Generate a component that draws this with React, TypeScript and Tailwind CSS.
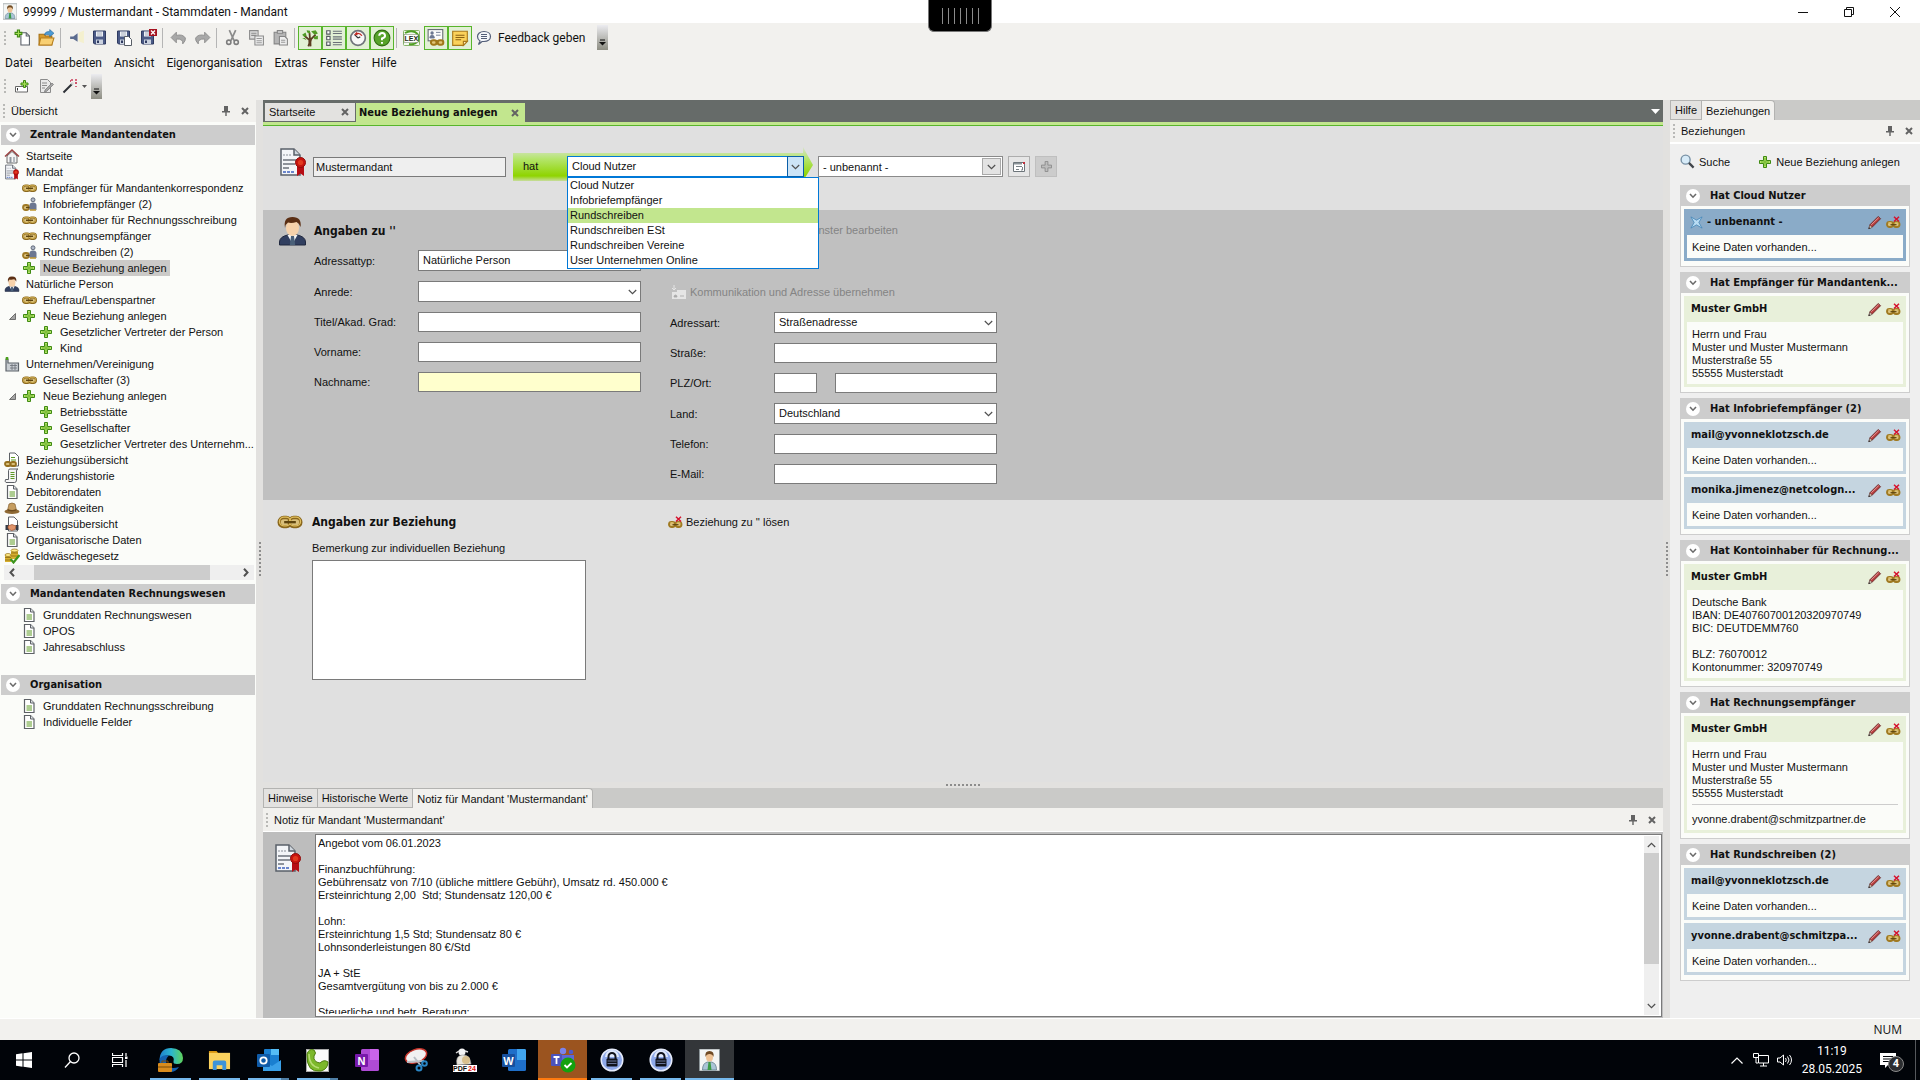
import type { ReactNode } from "react";
import clsx from "clsx";

interface IconProps {
	className?: string;
}

const Svg = ({
	children,
	className = "size-4",
	box = "0 0 16 16",
}: {
	children: ReactNode;
	className?: string;
	box?: string;
}) => (
	<svg
		viewBox={box}
		className={clsx("shrink-0", className)}
		fill="none"
		aria-hidden="true">
		{children}
	</svg>
);

/* ---------- icons ---------- */

const PlusIcon = ({ className = "size-3" }: IconProps) => (
	<Svg className={className} box="0 0 12 12">
		<path
			d="M4.5 .5h3v4h4v3h-4v4h-3v-4h-4v-3h4z"
			fill="#b5e26b"
			stroke="#3f8a12"
		/>
		<path d="M6 2v8M2 6h8" stroke="#6cb52a" />
	</Svg>
);

const ChainIcon = ({ className = "w-[15px] h-[9px]" }: IconProps) => (
	<Svg className={className} box="0 0 15 9">
		<rect x="1" y="1.5" width="7" height="5.5" rx="2.7" fill="#d9bf7a" stroke="#8a671c" strokeWidth="2" />
		<rect x="7" y="1.5" width="7" height="5.5" rx="2.7" fill="#d9bf7a" stroke="#8a671c" strokeWidth="2" />
		<rect x="1.2" y="1.3" width="6.6" height="5.2" rx="2.6" stroke="#e0bf60" strokeWidth=".8" />
		<rect x="7.2" y="1.3" width="6.6" height="5.2" rx="2.6" stroke="#e0bf60" strokeWidth=".8" />
		<path d="M4 4.3h7" stroke="#5e450f" strokeWidth="1.4" />
	</Svg>
);

const ChainPersonIcon = () => (
	<Svg className="w-[15px] h-[15px]" box="0 0 15 15">
		<rect x="1" y="8" width="6" height="5" rx="2.5" fill="#d9bf7a" stroke="#a07a26" strokeWidth="1.8" />
		<path d="M4 10.5h5" stroke="#5e450f" strokeWidth="1.4" />
		<circle cx="11" cy="2.8" r="2" fill="#aeb7c6" stroke="#4a5263" strokeWidth=".8" />
		<path d="M7.5 13V8.5q0-3 3.5-3t3.5 3V13z" fill="#6c7791" />
		<path d="M8 13h6" stroke="#c29b3a" strokeWidth="1.6" />
	</Svg>
);

const UnlinkIcon = () => (
	<Svg className="w-[15px] h-[13px]" box="0 0 15 13">
		<rect x="1" y="6" width="6" height="5" rx="2.5" fill="#dcc27c" stroke="#a07a22" strokeWidth="1.9" />
		<rect x="7.5" y="6" width="6" height="5" rx="2.5" fill="#dcc27c" stroke="#a07a22" strokeWidth="1.9" />
		<path d="M2 7.2q2-1.5 4 0M8.500 7.200q2-1.500 4 0" stroke="#efd580" strokeWidth=".8" />
		<path d="M4.500 8.700h6" stroke="#5e450f" strokeWidth="1.2" />
		<path d="M8 .8l5 4.700M13 .8l-5 4.700" stroke="#d6112c" strokeWidth="1.500" />
	</Svg>
);

const PencilIcon = () => (
	<Svg className="size-[15px]">
		<path d="M2 14.500l1-4L12 1.500l2.500 2.500-9 9z" fill="#b33b3b" stroke="#5f2222" strokeWidth=".8" />
		<path d="M4.500 10.500L12.500 2.800" stroke="#eba0a0" />
		<path d="M2 14.500l1-3.500 2.500 2.300z" fill="#f1dfc6" stroke="#555" strokeWidth=".6" />
		<path d="M1.500 15l.8-2 1.200 1.200z" fill="#222" />
	</Svg>
);

const DocIcon = ({ className = "size-4" }: IconProps) => (
	<Svg className={className}>
		<path d="M3.500 1.500h6l3.500 3.500v9.500H3.500z" fill="#fff" stroke="#5d6166" strokeWidth="1.200" />
		<path d="M9.500 1.500V5H13" stroke="#5d6166" fill="#dfe3e6" />
		<path d="M5.500 8h5.500M5.500 10h5.500M5.500 12h5.500" stroke="#5d9a24" />
	</Svg>
);

const CertIcon = ({ className = "size-4" }: IconProps) => (
	<Svg className={className} box="0 0 28 30">
		<path d="M2 2h13l6 6v20H2z" fill="#f3f5f8" stroke="#5a6069" strokeWidth="1.500" />
		<path d="M15 2v6h6" fill="#cfd6dd" stroke="#5a6069" strokeWidth="1.500" />
		<path d="M4 8h8" stroke="#8a9099" strokeDasharray="2 1" />
		<path d="M4 13h13M4 17h12M4 21h6" stroke="#6c727b" strokeWidth="1.300" />
		<path d="M4 25h12" stroke="#3f62bd" strokeWidth="1.500" strokeDasharray="3 1" />
		<path d="M18 18v11l3.500-2.500L25 29V18z" fill="#b70d14" />
		<circle cx="21.500" cy="15.500" r="5" fill="#c8140f" stroke="#8f0c0c" />
		<circle cx="21.500" cy="15.500" r="2.600" fill="#e23a20" />
	</Svg>
);

const PersonIcon = ({ className = "size-4" }: IconProps) => (
	<Svg className={className} box="0 0 28 30">
		<path d="M1 29v-3q0-5 8-7h10q8 2 8 7v3z" fill="#313f60" stroke="#20283f" />
		<path d="M9 19l5 9 5-9z" fill="#f5f5f5" />
		<path d="M12.500 20h3l1.200 9h-5.400z" fill="#4a6079" />
		<ellipse cx="14" cy="12" rx="6.500" ry="8" fill="#f7d2ab" />
		<path d="M6.500 12Q4.500 1 14 1t8 10q-1.500-4-4-5-5 1.500-8.500.500-2.500 1.500-3 5.500z" fill="#5b2f14" />
	</Svg>
);

const HouseIcon = () => (
	<Svg>
		<path d="M3 8v7h10V8L8 3.500z" fill="#f4f4f4" stroke="#6d6d6d" />
		<path d="M1 8.500L8 2l7 6.500" stroke="#9b4141" strokeWidth="1.400" />
		<rect x="5.500" y="9" width="2" height="6" fill="#8f969d" />
		<rect x="9" y="9" width="2" height="6" fill="#b5babf" />
	</Svg>
);

const FactoryIcon = () => (
	<Svg>
		<path d="M2 15V3h2v4h10.500v8z" fill="#c9ced3" stroke="#5d636a" strokeWidth="1.200" />
		<path d="M3 1v3" stroke="#4aa01c" strokeWidth="2.500" />
		<path d="M6 9.500h7M6 12h7M8 8v6M11 8v6" stroke="#6a7077" strokeWidth=".8" />
	</Svg>
);

const DocChainIcon = () => (
	<Svg>
		<path d="M5.500 1h5.500l3.500 3.500V14h-9z" fill="#fff" stroke="#5d6166" />
		<path d="M7 5.500h4M7 8h5" stroke="#5d9a24" />
		<rect x="1" y="10" width="5.500" height="4" rx="2" fill="#d9bf7a" stroke="#96701e" strokeWidth="1.800" />
		<rect x="6.500" y="10" width="5.500" height="4" rx="2" fill="#d9bf7a" stroke="#96701e" strokeWidth="1.800" />
	</Svg>
);

const ScrollIcon = () => (
	<Svg>
		<path d="M4.500 2.500q0-1.500 1.500-1.500h8q-1.500 0-1.500 2v9q0 2.500-2 2.500H2q-1.500-1-.5-3h3z" fill="#f5f5f5" stroke="#5d6166" />
		<path d="M6.500 4.500h4M6.500 6.500h4M6.500 8.500h4M6.500 10.500h4" stroke="#5d9a24" />
	</Svg>
);

const HatIcon = () => (
	<Svg>
		<ellipse cx="8" cy="11.500" rx="7.500" ry="2.500" fill="#8f6a34" />
		<path d="M3.500 10.500L5 4q3-2 6 0l1.500 6.500q-4.500 2-9 0z" fill="#c59d5f" stroke="#856230" strokeWidth=".7" />
		<path d="M3.800 9q4.200 2 8.500 0v1.500q-4.300 2-8.800 0z" fill="#6b4a1d" />
	</Svg>
);

const HandshakeIcon = () => (
	<Svg>
		<path d="M4.500 1h5.500l3.500 3.500V15h-9z" fill="#fff" stroke="#5d6166" />
		<path d="M1.500 9h3v5h-3zM11.500 9h3v5h-3z" fill="#343b47" />
		<path d="M4 10l4-1.500 4 1.500-1 3.500-3.500 1L4 12.500z" fill="#e0946a" stroke="#9c532d" strokeWidth=".7" />
	</Svg>
);

const CoinsIcon = () => (
	<Svg>
		<path d="M1 7h6v7H1zM7 2h7v9H7z" fill="#d8b02f" />
		<path d="M1 9.500h6M1 12h6M7 5h7M7 8h7" stroke="#8d6b10" strokeWidth=".8" />
		<ellipse cx="4" cy="7" rx="3" ry="1.500" fill="#ffe984" stroke="#93701a" strokeWidth=".7" />
		<ellipse cx="10.500" cy="2.500" rx="3.500" ry="1.500" fill="#ffe984" stroke="#93701a" strokeWidth=".7" />
		<path d="M6.500 11l3 3.500L15.500 7" stroke="#3d941c" strokeWidth="2.200" />
	</Svg>
);

const PinIcon = () => (
	<Svg className="w-2 h-[10px]" box="0 0 8 10">
		<path d="M2 0h4v5h2v1.500H4.700V10H3.300V6.500H0V5h2z" fill="#636363" />
	</Svg>
);

const CrossIcon = () => (
	<Svg className="size-2" box="0 0 8 8">
		<path d="M1 1l6 6M7 1L1 7" stroke="#636363" strokeWidth="2" />
	</Svg>
);

const Chevron = ({ className = "w-[9px] h-[6px]" }: IconProps) => (
	<Svg className={className} box="0 0 9 6">
		<path d="M.8 1l3.700 3.700L8.200 1" stroke="#505050" strokeWidth="1.200" />
	</Svg>
);

const BadgeChevron = () => (
	<span className="flex size-[14px] shrink-0 items-center justify-center rounded-full bg-white">
		<Svg className="w-2 h-[6px]" box="0 0 8 6">
			<path d="M1 1l3 3.200L7 1" stroke="#6b6b6b" strokeWidth="1.600" />
		</Svg>
	</span>
);

const ClientIcon = ({ className = "size-4" }: IconProps) => (
	<Svg className={className} box="0 0 20 22">
		<rect width="20" height="22" fill="#f3f5f4" stroke="#8d9699" />
		<path d="M3 21q0-7 5-8h4q5 1 5 8z" fill="#a9c4d6" stroke="#55707f" strokeWidth=".7" />
		<path d="M9 13h2l1 8H8z" fill="#3a9b46" />
		<ellipse cx="10" cy="8" rx="3.500" ry="4.500" fill="#eec294" />
		<path d="M6 8Q5 2 10 2t4 6q-1-3-4-3T6 8z" fill="#6f4a23" />
	</Svg>
);

const FloppyIcon = ({ children }: { children?: ReactNode }) => (
	<Svg className="size-[17px]" box="0 0 17 17">
		<path d="M1.500 2h12v13h-11l-1-1z" fill="#4b5a86" stroke="#2f3b61" />
		<path d="M4 2.500h7v5H4z" fill="#eef1f6" />
		<path d="M5 4h5M5 6h5" stroke="#8d96ab" strokeWidth=".7" />
		<path d="M4 10.500h7V15H4z" fill="#cbd2df" />
		<path d="M5 11.500h2V14H5z" fill="#2f3b61" />
		{children}
	</Svg>
);

/* ---------- toolbar ---------- */

const NewIcon = () => (
	<Svg className="size-[17px]">
		<path d="M6.500 3.500h5l3 3V15h-8z" fill="#fff" stroke="#585e66" />
		<path d="M11.500 3.500v3h3" stroke="#585e66" />
		<path d="M3.200 1h2v2.200h2.200v2H5.200v2.200h-2V5.200H1v-2h2.200z" fill="#a6dd55" stroke="#3f8a12" />
	</Svg>
);

const OpenIcon = () => (
	<Svg className="size-[17px]">
		<path d="M1 5h5l1 1.500h6V15H1z" fill="#d89a2b" stroke="#a56f15" />
		<path d="M2.500 8.500H15L13 15H1z" fill="#f8cf72" stroke="#b57d1c" />
		<path d="M6 5.500q1-3.500 5-3V.5l4 3.500-4 3.300V5.500q-3-.5-5 0z" fill="#4b9bd6" stroke="#2c6a9c" strokeWidth=".6" />
	</Svg>
);

const HornIcon = () => (
	<Svg className="size-[17px]">
		<path d="M2 7h3l4-3v8L5 9.500H2z" fill="#5b6b8f" />
		<path d="M10 3.500l5-2v12l-5-2z" fill="#f4f0cf" />
	</Svg>
);

const UndoIcon = ({ className = "size-[17px]" }: IconProps) => (
	<Svg className={className}>
		<path d="M1 8l5-5v3q6-1.500 8.500 2.500Q15 11 12 14q.5-5-6-4.500V13z" fill="#a8a8a8" stroke="#828282" strokeWidth=".7" />
	</Svg>
);

const CutIcon = () => (
	<Svg className="size-[17px]">
		<path d="M5 1l4.500 10M11 1L6.500 11" stroke="#8b8b8b" strokeWidth="1.600" />
		<circle cx="4.500" cy="12.500" r="2" stroke="#7d7d7d" strokeWidth="1.500" />
		<circle cx="11.500" cy="12.500" r="2" stroke="#7d7d7d" strokeWidth="1.500" />
	</Svg>
);

const CopyIcon = () => (
	<Svg className="size-[17px]">
		<path d="M1.500 1.500h8v8h-8z" fill="#ddd" stroke="#8b8b8b" />
		<path d="M3 4h5M3 6h5" stroke="#8b8b8b" />
		<path d="M6.500 6.500h8v8.500h-8z" fill="#eee" stroke="#8b8b8b" />
		<path d="M8 9h5M8 11h5M8 13h5" stroke="#999" />
	</Svg>
);

const PasteIcon = () => (
	<Svg className="size-[17px]">
		<path d="M2 3h11v11H2z" fill="#b5b5b5" stroke="#858585" />
		<path d="M5 1.500h5V4H5z" fill="#ddd" stroke="#858585" />
		<path d="M7 7h5l2.500 2.500V15H7z" fill="#eee" stroke="#858585" />
		<path d="M8.500 10.500h4M8.500 12.500h4" stroke="#999" />
	</Svg>
);

const TreeIcon = () => (
	<Svg className="size-[18px]">
		<path d="M6.500 15.500q1.500-3 .8-6L3 6M8.500 15.500q-.7-4 .5-6.500L13 5M8 9L7.500 3" stroke="#5a3d22" strokeWidth="1.600" />
		<path d="M1 5l3-2 1 3-2 1zM5 1l3 .5L8 4 5.500 3zM9 2l4-1 2 3-3 1zM11 7l4-1v3l-3 0zM1 8l2.500 0L5 10z" fill="#4f9a24" />
	</Svg>
);

const ListIcon = () => (
	<Svg className="size-[18px]">
		<path d="M1.500 1.500h3v3h-3zM1.500 6.500h3v3h-3zM1.500 11.500h3v3h-3z" fill="#fff" stroke="#555b62" />
		<path d="M7 2h8M7 4h8M7 7h8M7 9h8M7 12h8M7 14h8" stroke="#6b7178" />
	</Svg>
);

const ClockIcon = () => (
	<Svg className="size-[18px]">
		<circle cx="8" cy="8" r="6.500" fill="#f8f8f8" stroke="#70757b" strokeWidth="1.500" />
		<path d="M8 8L5 5M8 8l2-1" stroke="#333" />
		<path d="M11.500 6A4.500 4.500 0 006 4.300L7 3M6 4.300l1.500 1" stroke="#c2261f" strokeWidth="1.200" />
	</Svg>
);

const HelpIcon = () => (
	<Svg className="size-[18px]">
		<circle cx="8" cy="8" r="7" fill="#57a32a" stroke="#2f6b10" />
		<path d="M5.500 6q.3-2.500 2.700-2.500T10.700 6Q10.700 7.500 8 8.500v1.500M8 11.500V13" stroke="#fff" strokeWidth="1.800" />
	</Svg>
);

const LexIcon = () => (
	<Svg className="size-[18px]" box="0 0 18 18">
		<rect x=".5" y="1.500" width="16" height="15" rx="1" fill="#f5faf0" stroke="#88b36b" />
		<path d="M2 4q5-3 10-1 5 3 3 9-3 4-9 3" stroke="#4f9f23" strokeWidth="2" />
		<rect x="1" y="5.500" width="14" height="8" fill="#fff" stroke="#6a7c5c" strokeWidth=".5" />
		<text x="1.500" y="12" fontSize="7" fontWeight="700" fill="#1f2a16" fontFamily="Liberation Sans">
			LEX
		</text>
	</Svg>
);

const CardChainIcon = () => (
	<Svg className="size-[18px]">
		<rect x="1" y=".5" width="13" height="10" fill="#fbfbfb" stroke="#6a7077" />
		<circle cx="4.500" cy="3.500" r="1.500" fill="#6c7791" />
		<path d="M2.500 8q0-2.500 2-2.500t2 2.500zM8 3h4M8 5.500h4" fill="#6c7791" stroke="#6c7791" strokeWidth=".8" />
		<rect x="3.500" y="10" width="5" height="4" rx="2" fill="#e0c577" stroke="#a07718" strokeWidth="1.800" />
		<rect x="9.500" y="10" width="5" height="4" rx="2" fill="#e0c577" stroke="#a07718" strokeWidth="1.800" />
	</Svg>
);

const NoteIcon = () => (
	<Svg className="size-[18px]">
		<path d="M1.500 2h13v9l-3.500 3.500H1.500z" fill="#fbd25a" stroke="#a9791a" />
		<path d="M11 14.500V11h3.500z" fill="#fff3c4" stroke="#a9791a" />
		<path d="M4 5.500h8M4 7.500h8M4 9.500h5" stroke="#8a6212" />
	</Svg>
);

const BubbleIcon = () => (
	<Svg className="size-4">
		<path d="M8 1.500c4 0 6.500 2.200 6.500 5S12 11.500 8 11.500H6L2.500 14.500 4 11Q1.500 9.500 1.500 6.500c0-2.800 2.500-5 6.500-5z" fill="#f4f6fa" stroke="#525d77" strokeWidth="1.200" />
		<path d="M5 4.500h6M5 6.500h6M5 8.500h6" stroke="#525d77" />
	</Svg>
);

const Separator = () => <span className="ml-0.5 mr-[3px] h-5 w-px bg-[#b5b5b5]" />;

const Grip = () => (
	<span className="flex shrink-0 flex-col gap-0.5">
		{[0, 1, 2, 3].map((dot) => (
			<span key={dot} className="size-0.5 bg-[#b9b9b6]" />
		))}
	</span>
);

const ToolButton = ({
	label,
	active,
	children,
}: {
	label: string;
	active?: boolean;
	children: ReactNode;
}) => (
	<button
		type="button"
		aria-label={label}
		className={clsx(
			"flex size-6 shrink-0 items-center justify-center",
			active && "border border-[#58b52c] bg-[#e2f0d5]"
		)}>
		{children}
	</button>
);

const Overflow = ({ className }: IconProps) => (
	<button
		type="button"
		aria-label="Weitere Schaltflächen"
		className={clsx(
			"flex h-[25px] w-[11px] shrink-0 flex-col items-center justify-end bg-linear-to-b from-[#ececf0] to-[#8e8e83] pb-1",
			className
		)}>
		<Svg className="w-[7px] h-[7px]" box="0 0 7 7">
			<path d="M1 1h5" stroke="#111" />
			<path d="M0 3h7L3.500 6.500z" fill="#111" />
		</Svg>
	</button>
);

const TitleBar = () => (
	<header className="relative flex h-[23px] shrink-0 items-center bg-white pl-[3px] text-xs">
		<ClientIcon className="w-[14px] h-[17px]" />
		<h1 className="ml-[6px] flex-1 font-[Roboto,sans-serif]">
			99999 / Mustermandant - Stammdaten - Mandant
		</h1>
		<div className="absolute left-1/2 top-0 z-10 flex h-8 w-16 -translate-x-1/2 items-center justify-center gap-[5px] rounded-b-md border border-t-0 border-[#777] bg-black">
			{[0, 1, 2, 3, 4, 5, 6].map((bar) => (
				<span key={bar} className="h-4 w-px bg-[#8b8b8b]" />
			))}
		</div>
		<div className="flex items-center gap-9 pr-5">
			<button type="button" aria-label="Minimieren">
				<Svg className="size-[10px]" box="0 0 10 10">
					<path d="M0 5.500h10" stroke="#111" />
				</Svg>
			</button>
			<button type="button" aria-label="Verkleinern">
				<Svg className="size-[10px]" box="0 0 10 10">
					<path d="M.5 2.500h7v7h-7zM2.500 2.500v-2h7v7h-2" stroke="#111" />
				</Svg>
			</button>
			<button type="button" aria-label="Schließen">
				<Svg className="size-[10px]" box="0 0 10 10">
					<path d="M0 0l10 10M10 0L0 10" stroke="#111" />
				</Svg>
			</button>
		</div>
	</header>
);

const menuItems = ["Datei", "Bearbeiten", "Ansicht", "Eigenorganisation", "Extras", "Fenster", "Hilfe"];

const Toolbars = () => (
	<div className="shrink-0 bg-[#f2f1ee] text-xs font-[Roboto,sans-serif]">
		<div className="flex h-7 items-center pl-1 pt-px">
			<Grip />
			<div className="ml-1 flex items-center">
				<ToolButton label="Neu"><NewIcon /></ToolButton>
				<ToolButton label="Öffnen"><OpenIcon /></ToolButton>
				<Separator />
				<ToolButton label="Senden"><HornIcon /></ToolButton>
				<ToolButton label="Speichern"><FloppyIcon /></ToolButton>
				<ToolButton label="Speichern und neu">
					<FloppyIcon>
						<path d="M8.500 7.500h4l3 3v6h-7z" fill="#fff" stroke="#585e66" />
					</FloppyIcon>
				</ToolButton>
				<ToolButton label="Speichern und schließen">
					<FloppyIcon>
						<path d="M9 0h8v7H9z" fill="#a51220" />
						<path d="M11 1.500l4 4M15 1.500l-4 4" stroke="#fff" strokeWidth="1.300" />
					</FloppyIcon>
				</ToolButton>
				<Separator />
				<ToolButton label="Rückgängig"><UndoIcon /></ToolButton>
				<ToolButton label="Wiederholen"><UndoIcon className="size-[17px] -scale-x-100" /></ToolButton>
				<Separator />
				<ToolButton label="Ausschneiden"><CutIcon /></ToolButton>
				<ToolButton label="Kopieren"><CopyIcon /></ToolButton>
				<ToolButton label="Einfügen"><PasteIcon /></ToolButton>
				<Separator />
				<ToolButton label="Baum" active><TreeIcon /></ToolButton>
				<ToolButton label="Liste" active><ListIcon /></ToolButton>
				<ToolButton label="Historie" active><ClockIcon /></ToolButton>
				<ToolButton label="Hilfe anzeigen" active><HelpIcon /></ToolButton>
				<Separator />
				<ToolButton label="Lexinform"><LexIcon /></ToolButton>
				<ToolButton label="Beziehungen anzeigen" active><CardChainIcon /></ToolButton>
				<ToolButton label="Notiz" active><NoteIcon /></ToolButton>
			</div>
			<button type="button" className="ml-1 flex items-center gap-[6px]">
				<BubbleIcon />
				Feedback geben
			</button>
			<Overflow className="ml-3" />
		</div>
		<nav className="flex h-6 items-center gap-3 pl-[5px]">
			{menuItems.map((item) => (
				<button key={item} type="button">
					{item}
				</button>
			))}
		</nav>
		<div className="flex h-[25px] items-center pb-[3px] pl-1">
			<Grip />
			<div className="ml-1 flex items-center">
				<ToolButton label="Feld hinzufügen">
					<Svg>
						<path d="M1.500 8.500h12V14h-12z" fill="#fff" stroke="#666" />
						<path d="M3.500 10v2.500" stroke="#333" />
						<path d="M9.500 2.500h2V5H14v2h-2.500v2.500h-2V7H7V5h2.500z" fill="#a6dd55" stroke="#3f8a12" />
					</Svg>
				</ToolButton>
				<ToolButton label="Bearbeiten">
					<Svg>
						<path d="M2.500 1.500h7l3 3v10h-10z" fill="#e9e9e9" stroke="#8b8b8b" />
						<path d="M4 5h5M4 7.500h5M4 10h3" stroke="#8b8b8b" />
						<path d="M7 12l7-7 1.500 1.500-7 7L6.500 14z" fill="#a5a5a5" stroke="#777" strokeWidth=".7" />
					</Svg>
				</ToolButton>
				<ToolButton label="Assistent">
					<Svg>
						<path d="M1.500 14.500l9-9" stroke="#2e3136" strokeWidth="2" />
						<path d="M9.500 6.500l2-2" stroke="#d8d8d8" strokeWidth="2" />
						<path d="M10 1v2M14 1v2M13 5h2M14 8v1M8 3h1" stroke="#c41f42" strokeWidth="1.300" />
					</Svg>
				</ToolButton>
				<Svg className="w-[5px] h-[3px]" box="0 0 5 3">
					<path d="M0 0h5L2.500 3z" fill="#555" />
				</Svg>
			</div>
			<Overflow className="ml-1" />
		</div>
	</div>
);

/* ---------- left panel ---------- */

interface TreeItem {
	label: string;
	icon: ReactNode;
	level: 0 | 1 | 2;
	open?: boolean;
	selected?: boolean;
}

const mainTree: TreeItem[] = [
	{ label: "Startseite", icon: <HouseIcon />, level: 0 },
	{ label: "Mandat", icon: <CertIcon />, level: 0 },
	{ label: "Empfänger für Mandantenkorrespondenz", icon: <ChainIcon />, level: 1 },
	{ label: "Infobriefempfänger (2)", icon: <ChainPersonIcon />, level: 1 },
	{ label: "Kontoinhaber für Rechnungsschreibung", icon: <ChainIcon />, level: 1 },
	{ label: "Rechnungsempfänger", icon: <ChainIcon />, level: 1 },
	{ label: "Rundschreiben (2)", icon: <ChainPersonIcon />, level: 1 },
	{ label: "Neue Beziehung anlegen", icon: <PlusIcon />, level: 1, selected: true },
	{ label: "Natürliche Person", icon: <PersonIcon />, level: 0 },
	{ label: "Ehefrau/Lebenspartner", icon: <ChainIcon />, level: 1 },
	{ label: "Neue Beziehung anlegen", icon: <PlusIcon />, level: 1, open: true },
	{ label: "Gesetzlicher Vertreter der Person", icon: <PlusIcon />, level: 2 },
	{ label: "Kind", icon: <PlusIcon />, level: 2 },
	{ label: "Unternehmen/Vereinigung", icon: <FactoryIcon />, level: 0 },
	{ label: "Gesellschafter (3)", icon: <ChainIcon />, level: 1 },
	{ label: "Neue Beziehung anlegen", icon: <PlusIcon />, level: 1, open: true },
	{ label: "Betriebsstätte", icon: <PlusIcon />, level: 2 },
	{ label: "Gesellschafter", icon: <PlusIcon />, level: 2 },
	{ label: "Gesetzlicher Vertreter des Unternehm...", icon: <PlusIcon />, level: 2 },
	{ label: "Beziehungsübersicht", icon: <DocChainIcon />, level: 0 },
	{ label: "Änderungshistorie", icon: <ScrollIcon />, level: 0 },
	{ label: "Debitorendaten", icon: <DocIcon />, level: 0 },
	{ label: "Zuständigkeiten", icon: <HatIcon />, level: 0 },
	{ label: "Leistungsübersicht", icon: <HandshakeIcon />, level: 0 },
	{ label: "Organisatorische Daten", icon: <DocIcon />, level: 0 },
	{ label: "Geldwäschegesetz", icon: <CoinsIcon />, level: 0 },
];

const accountingTree: TreeItem[] = [
	{ label: "Grunddaten Rechnungswesen", icon: <DocIcon />, level: 1 },
	{ label: "OPOS", icon: <DocIcon />, level: 1 },
	{ label: "Jahresabschluss", icon: <DocIcon />, level: 1 },
];

const organisationTree: TreeItem[] = [
	{ label: "Grunddaten Rechnungsschreibung", icon: <DocIcon />, level: 1 },
	{ label: "Individuelle Felder", icon: <DocIcon />, level: 1 },
];

const indents = ["pl-1", "pl-[9px]", "pl-[26px]"];

const Tree = ({ items }: { items: TreeItem[] }) => (
	<ul>
		{items.map((item, index) => (
			<li key={index} className={clsx("flex h-4 items-center", indents[item.level])}>
				{item.level > 0 && (
					<span className="flex w-3 shrink-0">
						{item.open && (
							<Svg className="w-[7px] h-[7px]" box="0 0 7 7">
								<path d="M6.500 .5v6h-6z" fill="#a5a5a5" stroke="#555" strokeWidth=".8" />
							</Svg>
						)}
					</span>
				)}
				<button type="button" className="flex items-center whitespace-nowrap">
					<span className="flex w-4 justify-center">{item.icon}</span>
					<span
						className={clsx(
							"ml-[3px] h-4 px-[3px] leading-4",
							item.selected && "bg-[#cbcac8]"
						)}>
						{item.label}
					</span>
				</button>
			</li>
		))}
	</ul>
);

const SectionHeader = ({ title }: { title: string }) => (
	<h2 className="mx-px">
		<button
			type="button"
			className="flex h-5 w-full items-center gap-[10px] bg-[#cdcdcd] pl-[5px] text-left text-[11px] font-bold font-[DejaVu_Sans_Condensed,DejaVu_Sans,sans-serif]">
			<BadgeChevron />
			{title}
		</button>
	</h2>
);

const PanelTitle = ({ title, className }: { title: string; className?: string }) => (
	<div className={clsx("flex shrink-0 items-center bg-[#f2f1ee] pl-[3px]", className)}>
		<Grip />
		<h2 className="ml-[6px] flex-1">{title}</h2>
		<button type="button" aria-label="Anheften">
			<PinIcon />
		</button>
		<button type="button" aria-label="Schließen" className="ml-[11px] mr-[7px]">
			<CrossIcon />
		</button>
	</div>
);

const Overview = () => (
	<aside className="flex w-64 shrink-0 flex-col overflow-hidden bg-[#fbfcf9]">
		<PanelTitle title="Übersicht" className="mb-[3px] h-[22px]" />
		<SectionHeader title="Zentrale Mandantendaten" />
		<div className="pt-[3px]">
			<Tree items={mainTree} />
		</div>
		<div className="mb-1 ml-1 mr-[2px] mt-px flex h-[15px] items-center bg-[#efefef] px-[5px]">
			<Svg className="w-[6px] h-[9px]" box="0 0 6 9">
				<path d="M5 .8L1.500 4.500 5 8.200" stroke="#505050" strokeWidth="2" />
			</Svg>
			<span className="ml-[19px] h-full w-[176px] bg-[#cdcdcd]" />
			<Svg className="ml-auto w-[6px] h-[9px]" box="0 0 6 9">
				<path d="M1 .8l3.500 3.700L1 8.200" stroke="#505050" strokeWidth="2" />
			</Svg>
		</div>
		<SectionHeader title="Mandantendaten Rechnungswesen" />
		<div className="pb-5 pt-[3px]">
			<Tree items={accountingTree} />
		</div>
		<SectionHeader title="Organisation" />
		<div className="pt-[3px]">
			<Tree items={organisationTree} />
		</div>
	</aside>
);

const Splitter = () => (
	<div className="flex w-[7px] shrink-0 flex-col items-center justify-center gap-0.5 bg-[#e2e1df]">
		{[0, 1, 2, 3, 4, 5, 6, 7, 8].map((dot) => (
			<span key={dot} className="size-0.5 bg-[#8d8d8d]" />
		))}
	</div>
);

/* ---------- form ---------- */

const SelectBox = ({ id, value, className }: { id: string; value: string; className?: string }) => (
	<div className={clsx("relative h-[21px]", className)}>
		<select
			id={id}
			defaultValue={value}
			className="block h-full w-full appearance-none border border-[#7a7a7a] bg-white pb-px pl-1 outline-none">
			<option>{value}</option>
		</select>
		<span className="pointer-events-none absolute inset-y-0 right-1 flex items-center">
			<Chevron />
		</span>
	</div>
);

interface FieldProps {
	id: string;
	label: string;
	kind?: "select";
	value?: string;
	required?: boolean;
}

const Field = ({ id, label, kind, value = "", required }: FieldProps) => (
	<div className="flex items-center">
		<label htmlFor={id} className="w-[104px] shrink-0">
			{label}
		</label>
		{kind === "select" ? (
			<SelectBox id={id} value={value} className="w-[223px]" />
		) : (
			<input
				id={id}
				type="text"
				className={clsx(
					"h-5 w-[223px] border border-[#7a7a7a] px-1 outline-none",
					required ? "bg-[#ffffcd]" : "bg-white"
				)}
			/>
		)}
	</div>
);

const relationTypes = [
	"Cloud Nutzer",
	"Infobriefempfänger",
	"Rundschreiben",
	"Rundschreiben ESt",
	"Rundschreiben Vereine",
	"User Unternehmen Online",
];

const RelationRow = () => (
	<div className="flex h-[84px] items-start pl-4 pt-[21px]">
		<CertIcon className="w-7 h-[30px]" />
		<input
			type="text"
			aria-label="Mandant"
			readOnly
			defaultValue="Mustermandant"
			className="ml-[6px] mt-[10px] h-5 w-[193px] border border-[#7a7a7a] bg-[#efefef] px-[2px] outline-none"
		/>
		<div className="relative ml-[7px] flex h-[34px] w-[300px]">
			<svg viewBox="0 0 300 34" className="absolute inset-0 h-full w-full" aria-hidden="true">
				<defs>
					<linearGradient id="arrow" x1="0" y1="0" x2="0" y2="1">
						<stop offset="0" stopColor="#b9e87a" stopOpacity=".2" />
						<stop offset=".35" stopColor="#b4e56c" />
						<stop offset=".85" stopColor="#8fd400" />
						<stop offset="1" stopColor="#8fd400" stopOpacity=".3" />
					</linearGradient>
				</defs>
				<path d="M0 6h290V0l10 18-10 16H0z" fill="url(#arrow)" />
			</svg>
			<label htmlFor="relation" className="relative ml-[10px] mt-[11px] w-11">
				hat
			</label>
			<div className="relative mt-[9px] h-[21px] w-[237px]">
				<select
					id="relation"
					defaultValue="Cloud Nutzer"
					className="block h-full w-full appearance-none border border-[#0078d7] bg-white pb-px pl-1 outline-none">
					{relationTypes.map((type) => (
						<option key={type}>{type}</option>
					))}
				</select>
				<span className="pointer-events-none absolute inset-y-0 right-0 flex w-[17px] items-center justify-center border border-[#0a5fa8] bg-[#cce4f7]">
					<Chevron />
				</span>
				<ul
					role="listbox"
					aria-label="Beziehungsart"
					className="absolute left-0 top-[21px] z-20 w-[252px] border border-[#0078d7] bg-white">
					{relationTypes.map((type) => (
						<li
							key={type}
							role="option"
							aria-selected={type === "Rundschreiben"}
							className="h-[15px] px-[2px] leading-[15px] aria-selected:bg-[#c2e68e]">
							{type}
						</li>
					))}
				</ul>
			</div>
		</div>
		<div className="relative ml-[5px] mt-[9px] h-[21px] w-[185px]">
			<select
				aria-label="Adressat"
				defaultValue="- unbenannt -"
				className="block h-full w-full appearance-none border border-[#8a8a8a] bg-white pl-1 outline-none">
				<option>- unbenannt -</option>
			</select>
			<span className="pointer-events-none absolute bottom-0.5 right-0.5 top-0.5 flex w-[19px] items-center justify-center border border-[#a9a9a9] bg-[#e3e3e3]">
				<Chevron />
			</span>
		</div>
		<button
			type="button"
			aria-label="Adressat suchen"
			className="ml-[5px] mt-[9px] flex h-[21px] w-[22px] items-center justify-center border border-[#adadad] bg-[#e6e6e6]">
			<Svg className="w-3 h-[10px]" box="0 0 12 10">
				<path d="M.5 .5h11v9H.5z" fill="#fff" stroke="#6d757a" />
				<path d="M1 1h8v1.500H1z" fill="#8a9398" />
				<path d="M10 0h2v2h-2z" fill="#c2303e" />
				<path d="M3 4.500h6M3 7.500h3M9.500 5v3H8" stroke="#7a8287" />
			</Svg>
		</button>
		<button
			type="button"
			disabled
			aria-label="Adressat anlegen"
			className="ml-[5px] mt-[9px] flex h-[21px] w-[22px] items-center justify-center border border-[#bfbfbf] bg-[#cccccc]">
			<Svg className="size-[11px]" box="0 0 12 12">
				<path d="M4.500 .5h3v4h4v3h-4v4h-3v-4h-4v-3h4z" fill="#bdbdbd" stroke="#8b8b8b" />
			</Svg>
		</button>
	</div>
);

const headingClass = "text-xs font-bold leading-5 font-[DejaVu_Sans_Condensed,DejaVu_Sans,sans-serif]";

const AddressForm = () => (
	<section className="flex h-[290px] shrink-0 bg-[#c0c0c0] pl-[15px] pt-[6px]">
		<PersonIcon className="w-[29px] h-[30px]" />
		<div className="ml-[7px] w-[327px]">
			<h2 className={clsx(headingClass, "mt-[5px]")}>Angaben zu ''</h2>
			<div className="mt-[9px] flex flex-col gap-[10px]">
				<Field id="addressType" label="Adressattyp:" kind="select" value="Natürliche Person" />
				<Field id="salutation" label="Anrede:" kind="select" />
				<Field id="title" label="Titel/Akad. Grad:" />
				<Field id="firstName" label="Vorname:" />
				<Field id="lastName" label="Nachname:" required />
			</div>
		</div>
		<div className="ml-[29px] w-[327px] pt-[6px]">
			<button type="button" disabled className="flex h-4 w-[228px] items-center justify-end text-[#848484]">
				In eigenem Fenster bearbeiten
			</button>
			<button type="button" disabled className="mt-[46px] flex h-4 items-center gap-1 pl-[2px] text-[#848484]">
				<Svg className="size-[14px]" box="0 0 14 14">
					<path d="M2 0v5M0 3l2 2 2-2" stroke="#e5e5e5" />
					<path d="M0 7h5V5h9v9H0z" fill="#e5e5e5" />
					<path d="M2 12q0-2 1.500-2T5 12zM8 11h4" fill="#aaa" stroke="#aaa" strokeWidth=".9" />
				</Svg>
				Kommunikation und Adresse übernehmen
			</button>
			<div className="mt-3 flex flex-col gap-[10px]">
				<Field id="addressKind" label="Adressart:" kind="select" value="Straßenadresse" />
				<Field id="street" label="Straße:" />
				<div className="flex items-center">
					<label htmlFor="zip" className="w-[104px] shrink-0">
						PLZ/Ort:
					</label>
					<input id="zip" type="text" className="h-5 w-[43px] border border-[#7a7a7a] bg-white px-1 outline-none" />
					<input
						type="text"
						aria-label="Ort"
						className="ml-[18px] h-5 w-[162px] border border-[#7a7a7a] bg-white px-1 outline-none"
					/>
				</div>
				<Field id="country" label="Land:" kind="select" value="Deutschland" />
				<Field id="phone" label="Telefon:" />
				<Field id="email" label="E-Mail:" />
			</div>
		</div>
	</section>
);

const RelationForm = () => (
	<section className="flex flex-1 pl-3 pt-3">
		<ChainIcon className="mt-[3px] w-[30px] h-[15px]" />
		<div className="ml-[7px] w-[328px]">
			<h2 className={headingClass}>Angaben zur Beziehung</h2>
			<label htmlFor="remark" className="mt-2 block leading-4">
				Bemerkung zur individuellen Beziehung
			</label>
			<textarea
				id="remark"
				className="mt-1 block h-[120px] w-[274px] resize-none border border-[#7a7a7a] bg-white outline-none"
			/>
		</div>
		<button type="button" className="ml-7 flex h-5 items-center gap-[3px]">
			<UnlinkIcon />
			Beziehung zu '' lösen
		</button>
	</section>
);

const DocumentTabs = () => (
	<div className="flex h-[26px] shrink-0 items-end border-b border-[#58b52c] bg-[#c2e68e] pb-[3px]">
		<div className="flex h-full flex-1 items-end bg-[#666b69] pl-[2px]">
			<div className="mb-px flex h-[18px] w-[90px] items-center justify-between bg-[#e3e2e0] pl-[4px] pr-[6px]">
				<button type="button">Startseite</button>
				<button type="button" aria-label="Startseite schließen">
					<CrossIcon />
				</button>
			</div>
			<div className="ml-px flex h-[19px] w-[169px] items-center justify-between bg-[#c2e68e] pl-[3px] pr-[6px]">
				<button
					type="button"
					className="font-bold whitespace-nowrap font-[DejaVu_Sans_Condensed,DejaVu_Sans,sans-serif]">
					Neue Beziehung anlegen
				</button>
				<button type="button" aria-label="Neue Beziehung schließen">
					<CrossIcon />
				</button>
			</div>
			<button type="button" aria-label="Fensterliste" className="mb-2 ml-auto mr-[3px]">
				<Svg className="w-[9px] h-[5px]" box="0 0 9 5">
					<path d="M0 0h9L4.500 5z" fill="#fff" />
				</Svg>
			</button>
		</div>
	</div>
);

/* ---------- notes ---------- */

const noteText = `Angebot vom 06.01.2023

Finanzbuchführung:
Gebührensatz von 7/10 (übliche mittlere Gebühr), Umsatz rd. 450.000 €
Ersteinrichtung 2,00  Std; Stundensatz 120,00 €

Lohn:
Ersteinrichtung 1,5 Std; Stundensatz 80 €
Lohnsonderleistungen 80 €/Std

JA + StE
Gesamtvergütung von bis zu 2.000 €

Steuerliche und betr. Beratung:`;

const PanelTab = ({ active, children }: { active?: boolean; children: ReactNode }) => (
	<button
		type="button"
		className={clsx(
			"flex h-full items-center border-r border-t border-[#b3b3b1] px-1",
			active ? "rounded-tr-sm bg-[#f2f1ee]" : "border-b bg-[#e3e2e0]"
		)}>
		{children}
	</button>
);

const Notes = () => (
	<section className="flex h-[230px] shrink-0 flex-col">
		<div className="flex h-5 shrink-0 border-l border-[#b3b3b1] bg-[#cacac8]">
			<PanelTab>Hinweise</PanelTab>
			<PanelTab>Historische Werte</PanelTab>
			<PanelTab active>Notiz für Mandant 'Mustermandant'</PanelTab>
		</div>
		<PanelTitle title="Notiz für Mandant 'Mustermandant'" className="h-[24px] border-b border-white" />
		<div className="flex min-h-0 flex-1 bg-[#bdbdbd] pt-[2px]">
			<div className="w-[52px] pl-[11px] pt-[9px]">
				<CertIcon className="w-7 h-[30px]" />
			</div>
			<div className="mb-px mr-px flex flex-1 border border-[#7a7a7a] bg-white py-px pl-0.5 pr-0.5">
				<textarea
					aria-label="Notiz"
					defaultValue={noteText}
					className="mb-px mt-px flex-1 resize-none overflow-hidden leading-[13px] outline-none"
				/>
				<div className="flex w-[15px] flex-col items-center bg-[#efefef] py-[6px]">
					<Chevron className="w-[9px] h-[6px] rotate-180" />
					<span className="mt-[5px] h-[111px] w-full bg-[#cdcdcd]" />
					<Chevron className="mt-auto w-[9px] h-[6px]" />
				</div>
			</div>
		</div>
	</section>
);

/* ---------- relations panel ---------- */

interface Relation {
	name: string;
	lines: string[];
	contact?: string;
	tone: "selected" | "green" | "blue";
}

const addressLines = ["Herrn und Frau", "Muster und Muster Mustermann", "Musterstraße 55", "55555 Musterstadt"];
const emptyLines = ["Keine Daten vorhanden..."];

const relationGroups: { title: string; entries: Relation[] }[] = [
	{
		title: "Hat Cloud Nutzer",
		entries: [{ name: "- unbenannt -", lines: emptyLines, tone: "selected" }],
	},
	{
		title: "Hat Empfänger für Mandantenk...",
		entries: [{ name: "Muster GmbH", lines: addressLines, tone: "green" }],
	},
	{
		title: "Hat Infobriefempfänger (2)",
		entries: [
			{ name: "mail@yvonneklotzsch.de", lines: emptyLines, tone: "blue" },
			{ name: "monika.jimenez@netcologn...", lines: emptyLines, tone: "blue" },
		],
	},
	{
		title: "Hat Kontoinhaber für Rechnung...",
		entries: [
			{
				name: "Muster GmbH",
				lines: [
					"Deutsche Bank",
					"IBAN: DE40760700120320970749",
					"BIC: DEUTDEMM760",
					"",
					"BLZ: 76070012",
					"Kontonummer: 320970749",
				],
				tone: "green",
			},
		],
	},
	{
		title: "Hat Rechnungsempfänger",
		entries: [
			{
				name: "Muster GmbH",
				lines: addressLines,
				contact: "yvonne.drabent@schmitzpartner.de",
				tone: "green",
			},
		],
	},
	{
		title: "Hat Rundschreiben (2)",
		entries: [
			{ name: "mail@yvonneklotzsch.de", lines: emptyLines, tone: "blue" },
			{ name: "yvonne.drabent@schmitzpa...", lines: emptyLines, tone: "blue" },
		],
	},
];

const tones = {
	selected: "bg-[#8aabc8]",
	green: "bg-[#e8f0da]",
	blue: "bg-[#c5d5e0]",
};

const RelationEntry = ({ entry }: { entry: Relation }) => (
	<article className={clsx("px-[3px] pb-[3px]", tones[entry.tone])}>
		<div className="flex h-[26px] items-center gap-1 pl-1 pr-[2px]">
			{entry.tone === "selected" && (
				<Svg className="-ml-px size-[13px]" box="0 0 14 14">
					<path d="M1 1l6 3.500L13 1 9.500 7l3.500 6-6-3.500L1 13l3.500-6z" fill="#b9dcf3" stroke="#3e83b5" strokeWidth=".8" />
				</Svg>
			)}
			<h3 className="flex-1 whitespace-nowrap font-bold font-[DejaVu_Sans_Condensed,DejaVu_Sans,sans-serif]">
				{entry.name}
			</h3>
			<button type="button" aria-label="Bearbeiten">
				<PencilIcon />
			</button>
			<button type="button" aria-label="Beziehung lösen">
				<UnlinkIcon />
			</button>
		</div>
		<div className="bg-[#fbfcf9] px-[5px] pb-1 pt-[6px] leading-[13px]">
			{entry.lines.map((line, index) => (
				<p key={index} className="h-[13px] whitespace-nowrap">
					{line}
				</p>
			))}
			{entry.contact && (
				<p className="mt-1 border-t border-[#cdcdcd] pt-2">{entry.contact}</p>
			)}
		</div>
	</article>
);

const RelationsPanel = () => (
	<aside className="flex w-[250px] shrink-0 flex-col overflow-hidden bg-[#efefef]">
		<div className="flex h-5 shrink-0 border-l border-[#b3b3b1] bg-[#cacac8]">
			<PanelTab>Hilfe</PanelTab>
			<PanelTab active>Beziehungen</PanelTab>
		</div>
		<PanelTitle title="Beziehungen" className="h-6 border-b-2 border-white" />
		<div className="flex h-[41px] shrink-0 items-center pb-[6px] pl-[10px]">
			<button type="button" className="flex items-center gap-1">
				<Svg className="size-[15px]">
					<circle cx="6" cy="6" r="4.800" fill="#d7ebf8" stroke="#7891a5" strokeWidth="1.500" />
					<path d="M9.500 9.500l5 5" stroke="#3f444a" strokeWidth="2.400" />
				</Svg>
				Suche
			</button>
			<button type="button" className="ml-[29px] flex items-center gap-[5px]">
				<PlusIcon />
				Neue Beziehung anlegen
			</button>
		</div>
		<div className="flex flex-col gap-[5px] pl-[10px] pr-[10px]">
			{relationGroups.map((group) => (
				<section key={group.title} className="border border-[#cdcdcd] bg-[#fbfcf9]">
					<h2>
						<button
							type="button"
							className="flex h-5 w-full items-center gap-[10px] whitespace-nowrap bg-[#cdcdcd] pl-[5px] font-bold font-[DejaVu_Sans_Condensed,DejaVu_Sans,sans-serif]">
							<BadgeChevron />
							{group.title}
						</button>
					</h2>
					<div className="flex flex-col gap-[3px] px-[3px] pb-[5px] pt-[3px]">
						{group.entries.map((entry) => (
							<RelationEntry key={entry.name} entry={entry} />
						))}
					</div>
				</section>
			))}
		</div>
	</aside>
);

/* ---------- taskbar ---------- */

const LetterApp = ({ letter, front, back, light }: { letter: string; front: string; back: string; light: string }) => (
	<Svg className="size-6" box="0 0 24 24">
		<rect x="6" y="1" width="18" height="22" rx="1.500" fill={back} />
		<path d="M15 1h7.500q1.500 0 1.500 1.500V12h-9z" fill={light} />
		<rect x="0" y="6" width="13" height="13" rx="1" fill={front} />
		<text
			x="6.500"
			y="16.500"
			textAnchor="middle"
			fontSize="11"
			fontWeight="700"
			fill="#fff"
			fontFamily="Liberation Sans">
			{letter}
		</text>
	</Svg>
);

const EdgeIcon = () => (
	<Svg className="size-[26px]" box="0 0 26 26">
		<defs>
			<linearGradient id="edgeTop" x1="0" y1="0" x2="1" y2="0">
				<stop offset="0" stopColor="#1f7fd0" />
				<stop offset=".5" stopColor="#2bb5cf" />
				<stop offset="1" stopColor="#5fd35a" />
			</linearGradient>
		</defs>
		<path d="M1.500 13Q2 1 13 1q11 0 12 10 0 6-6 6-4 0-3.500-2.500Q17 9 11 8.500 4 8.500 1.500 13z" fill="url(#edgeTop)" />
		<path d="M1.500 12Q4 7 11 8.500q-4 3-2.500 8Q11 23 21 20q-3 5-9 5Q1 24 1.500 12z" fill="#1460b0" />
		<rect x="0" y="16" width="14" height="9" rx="1" fill="#d98c1e" />
		<path d="M4 16v-2h6v2M0 20h14" stroke="#7a4a08" />
	</Svg>
);

const LockIcon = () => (
	<Svg className="size-6" box="0 0 24 24">
		<circle cx="12" cy="12" r="10.800" fill="#8ea9ea" stroke="#e5ebfb" strokeWidth="1.500" />
		<path d="M5 9a7 7 0 0114 0z" fill="#dfe8fc" />
		<path d="M8.500 11V8.500a3.500 3.500 0 017 0V11" stroke="#10131c" strokeWidth="2" />
		<rect x="6.500" y="10.500" width="11" height="8" rx="1" fill="#10131c" />
		<path d="M7.500 13h9M7.500 15.500h9" stroke="#7e8db8" strokeWidth=".8" />
	</Svg>
);

const taskApps: { label: string; icon: ReactNode; state: string }[] = [
	{ label: "Edge", icon: <EdgeIcon />, state: "running" },
	{
		label: "Explorer",
		icon: (
			<Svg className="size-[23px]" box="0 0 24 22">
				<path d="M1 1h8l2 3H1z" fill="#d8950e" />
				<rect x="1" y="3" width="22" height="17" fill="#fbd25e" />
				<path d="M5 21v-8q0-2 2-2h10q2 0 2 2v8h-4v-5H9v5z" fill="#3d93d8" />
			</Svg>
		),
		state: "running",
	},
	{
		label: "Outlook",
		icon: (
			<Svg className="size-6" box="0 0 24 24">
				<rect x="7" y="1" width="15" height="18" rx="1" fill="#1a7fd0" />
				<path d="M14 1h8v6h-8z" fill="#55bdf5" />
				<path d="M6 12l9 6 9-6v11H6z" fill="#3aa0e8" />
				<rect y="6" width="13" height="13" rx="1" fill="#0f5ba8" />
				<circle cx="6.500" cy="12.500" r="3.200" stroke="#fff" strokeWidth="1.800" />
			</Svg>
		),
		state: "grouped",
	},
	{
		label: "Telefonie",
		icon: (
			<Svg className="size-[23px]" box="0 0 23 23">
				<rect width="22" height="22" x=".5" y=".5" fill="#fafafa" stroke="#aaa" />
				<path d="M1 5Q3-1 8 1q3 3 0 6-1 6 6 7 4-4 8-1 0 7-7 9Q0 24 1 5z" fill="#7cb82b" stroke="#4e7e10" />
				<path d="M3 5q0 12 10 14" stroke="#b6dc74" strokeWidth="1.500" />
			</Svg>
		),
		state: "grouped",
	},
	{
		label: "OneNote",
		icon: <LetterApp letter="N" front="#7719aa" back="#ae4bd5" light="#ca64ea" />,
		state: "idle",
	},
	{
		label: "Snipping Tool",
		icon: (
			<Svg className="size-6" box="0 0 24 24">
				<ellipse cx="12" cy="8" rx="11" ry="6.500" transform="rotate(-20 12 8)" fill="#f1f1f1" stroke="#c9362d" strokeWidth="1.500" />
				<path d="M3 14l17-1M10 9l7 9" stroke="#b9bec5" strokeWidth="2" />
				<circle cx="15" cy="20" r="2.500" stroke="#2a86c5" strokeWidth="2" />
				<circle cx="20.500" cy="15.500" r="2.300" stroke="#2a86c5" strokeWidth="2" />
			</Svg>
		),
		state: "idle",
	},
	{
		label: "PDF24",
		icon: (
			<Svg className="size-6" box="0 0 24 24">
				<circle cx="9" cy="4" r="3.500" fill="#f4f4f4" />
				<path d="M4 17Q2 8 9 7q8-1 9 9z" fill="#e9e6dc" stroke="#999" strokeWidth=".6" />
				<circle cx="13" cy="12" r="4" fill="#d9c08d" />
				<path d="M6 3l-3 2M12 3l3 1" stroke="#ddd" strokeWidth="1.500" />
				<rect y="17" width="24" height="7" fill="#fff" />
				<text x="0" y="23" fontSize="7" fontWeight="700" fill="#111" fontFamily="Liberation Sans">
					PDF
				</text>
				<text x="15" y="23" fontSize="7" fontWeight="700" fill="#e01010" fontFamily="Liberation Sans">
					24
				</text>
			</Svg>
		),
		state: "idle",
	},
	{
		label: "Word",
		icon: <LetterApp letter="W" front="#17509e" back="#1f6fc9" light="#41a5ee" />,
		state: "idle",
	},
	{
		label: "Teams",
		icon: (
			<Svg className="size-[26px]" box="0 0 26 26">
				<circle cx="13" cy="4" r="3.200" fill="#7b83eb" />
				<circle cx="21" cy="5" r="2.300" fill="#5059c9" />
				<path d="M8 8h16v8q-1 5-6 5-8 1-10-5z" fill="#5f67d4" />
				<rect x="1" y="7" width="11" height="12" rx="1" fill="#4b53bc" />
				<path d="M3.500 10h6M6.500 10v7" stroke="#fff" strokeWidth="1.800" />
				<circle cx="18" cy="18" r="7.500" fill="#13a10e" />
				<path d="M14.500 18l2.500 2.500 4.500-4.500" stroke="#fff" strokeWidth="1.800" />
			</Svg>
		),
		state: "alert",
	},
	{ label: "VPN", icon: <LockIcon />, state: "running" },
	{ label: "Remote", icon: <LockIcon />, state: "running" },
	{ label: "Stammdaten", icon: <ClientIcon className="w-[21px] h-[22px]" />, state: "active" },
];

const Taskbar = () => (
	<footer className="flex h-10 shrink-0 bg-[#010409] text-white font-[Roboto,sans-serif]">
		<button type="button" aria-label="Start" className="flex w-12 items-center justify-center">
			<Svg>
				<path d="M0 2.200l6.500-.9v6.200H0zM7.500 1.200L16 0v7.500H7.500zM0 8.500h6.500v6.200L0 13.800zM7.500 8.500H16V16l-8.500-1.200z" fill="#fff" />
			</Svg>
		</button>
		<button type="button" aria-label="Suchen" className="flex w-12 items-center justify-center">
			<Svg>
				<circle cx="10" cy="6" r="5" stroke="#fff" strokeWidth="1.300" />
				<path d="M6.500 9.500L1 15.500" stroke="#fff" strokeWidth="1.300" />
			</Svg>
		</button>
		<button type="button" aria-label="Aktive Anwendungen" className="mr-[2px] flex w-12 items-center justify-center">
			<Svg>
				<path d="M.5 1v2.500h10V1M.5 15v-2.500h10V15M.5 5.500h10v5H.5zM14 1v3M14 8v7" stroke="#fff" strokeWidth="1.200" />
				<path d="M13 4.500h2.500v2.500H13z" fill="#fff" />
			</Svg>
		</button>
		{taskApps.map((app) => (
			<button
				key={app.label}
				type="button"
				aria-label={app.label}
				className={clsx(
					"relative flex w-[49px] items-center justify-center",
					app.state === "alert" && "bg-[#9b541f]",
					app.state === "active" && "bg-[#333639]"
				)}>
				{app.icon}
				{app.state !== "idle" && (
					<span
						className={clsx(
							"absolute bottom-0 h-0.5",
							app.state === "alert" && "inset-x-0 bg-[#ff7a0f]",
							app.state === "active" && "inset-x-0 bg-[#76b9ed]",
							app.state === "running" && "inset-x-1 bg-[#76b9ed]",
							app.state === "grouped" && "inset-x-1 border-r-8 border-[#4f7fa6] bg-[#76b9ed]"
						)}
					/>
				)}
			</button>
		))}
		<div className="ml-auto flex items-center">
			<button type="button" aria-label="Ausgeblendete Symbole">
				<Svg className="w-3 h-[7px]" box="0 0 12 7">
					<path d="M.5 6.500L6 1l5.500 5.500" stroke="#fff" strokeWidth="1.200" />
				</Svg>
			</button>
			<button type="button" aria-label="Netzwerk" className="ml-[10px]">
				<Svg>
					<path d="M5.500 3.500h10v7.500h-10zM7 14h7M10.500 11v3M.5 1.500h5v4h-5zM3 5.500V11h2" stroke="#fff" />
				</Svg>
			</button>
			<button type="button" aria-label="Lautstärke" className="ml-2">
				<Svg>
					<path d="M.5 6v4h2.500L6.500 13V3L3 6zM8.500 6q1.500 2 0 4M10.500 4.500q3 3.500 0 7M12.500 3q4 5 0 10" stroke="#fff" />
				</Svg>
			</button>
			<time className="ml-[9px] text-center text-xs leading-[18px]">
				11:19
				<br />
				28.05.2025
			</time>
			<button type="button" aria-label="Benachrichtigungen" className="relative ml-[18px] mr-[11px] h-6 w-6">
				<Svg className="size-4" box="0 0 16 16">
					<path d="M0 1h16v12H8l-3 3v-3H0z" fill="#fff" />
					<path d="M3 4.500h10M3 7h10M3 9.500h6" stroke="#010409" />
				</Svg>
				<span className="absolute bottom-0 right-0 flex size-4 items-center justify-center rounded-full border border-[#8b8b8b] bg-[#2b2d30] text-[11px] font-bold">
					4
				</span>
			</button>
			<span className="mr-1 h-10 w-px bg-[#55585c]" />
		</div>
	</footer>
);

export default function App() {
	return (
		<div className="flex h-screen flex-col overflow-hidden bg-[#e2e1df] text-[11px] leading-4 text-[#111] font-[Liberation_Sans,Arial,sans-serif]">
			<TitleBar />
			<Toolbars />
			<div className="flex min-h-0 flex-1">
				<Overview />
				<Splitter />
				<main className="flex min-w-0 flex-1 flex-col">
					<DocumentTabs />
					<div className="flex min-h-0 flex-1 flex-col bg-[#e0e0e0]">
						<RelationRow />
						<AddressForm />
						<RelationForm />
					</div>
					<div className="flex h-[6px] shrink-0 items-center justify-center gap-0.5">
						{[0, 1, 2, 3, 4, 5, 6, 7, 8].map((dot) => (
							<span key={dot} className="size-0.5 bg-[#8d8d8d]" />
						))}
					</div>
					<Notes />
				</main>
				<Splitter />
				<RelationsPanel />
			</div>
			<div className="flex h-[22px] shrink-0 items-center justify-end border-t border-white bg-[#f2f1ee] pr-[18px] text-xs font-[Open_Sans,sans-serif]">
				NUM
			</div>
			<Taskbar />
		</div>
	);
}
